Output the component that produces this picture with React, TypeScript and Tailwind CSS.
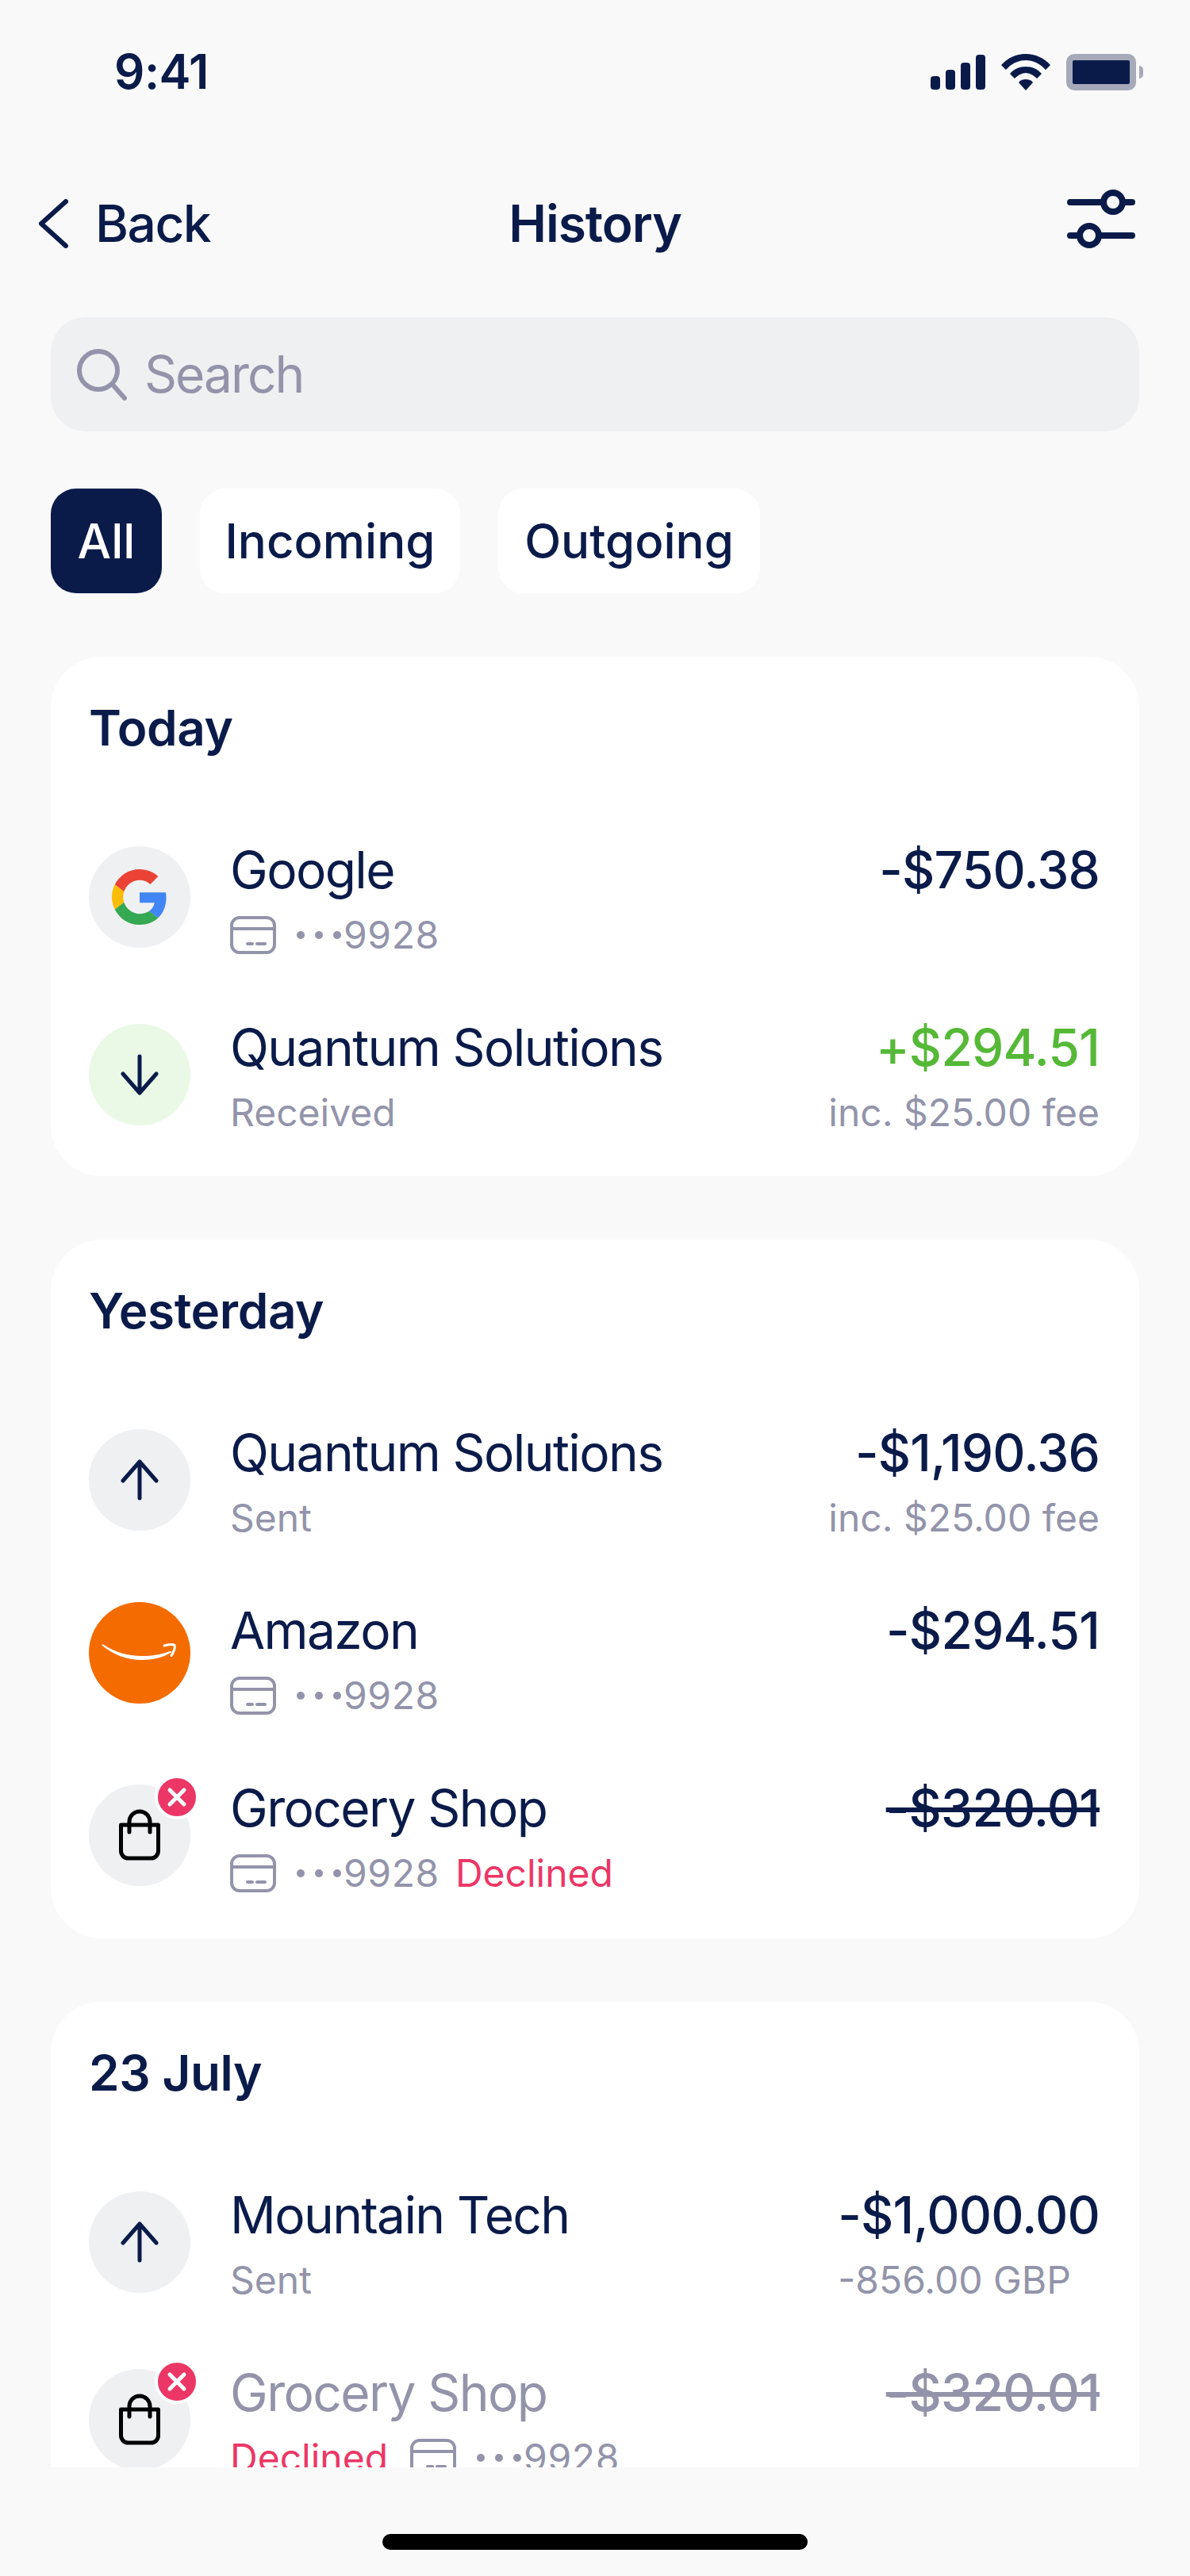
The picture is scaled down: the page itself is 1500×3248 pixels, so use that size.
import type { ReactNode } from "react";

const NAVY = "#0a1b4a";

function CardIcon() {
  return (
    <svg width="58" height="48" viewBox="0 0 58 48" fill="none" stroke="#9394aa" strokeWidth="4" className="shrink-0">
      <rect x="2" y="2" width="54" height="44" rx="10" />
      <path d="M2 16h54" />
      <path d="M22 35h6M34 35h10" strokeLinecap="round" />
    </svg>
  );
}

function CardNumber() {
  return (
    <span className="flex items-center">
      <CardIcon />
      <span className="ml-[26px] flex gap-[13px]">
        <span className="h-[10px] w-[10px] rounded-full bg-[#9394aa]" />
        <span className="h-[10px] w-[10px] rounded-full bg-[#9394aa]" />
        <span className="h-[10px] w-[10px] rounded-full bg-[#9394aa]" />
      </span>
      <span className="ml-[3px] tracking-[0.6px]">9928</span>
    </span>
  );
}

function GoogleLogo() {
  return (
    <svg width="70" height="70" viewBox="0 0 48 48">
      <path fill="#EA4335" d="M24 9.5c3.54 0 6.71 1.22 9.21 3.6l6.85-6.85C35.9 2.38 30.47 0 24 0 14.62 0 6.51 5.38 2.56 13.22l7.98 6.19C12.43 13.72 17.74 9.5 24 9.5z" />
      <path fill="#4285F4" d="M46.98 24.55c0-1.57-.15-3.09-.38-4.55H24v9.02h12.94c-.58 2.96-2.26 5.48-4.78 7.18l7.73 6c4.51-4.18 7.09-10.36 7.09-17.65z" />
      <path fill="#FBBC05" d="M10.53 28.59c-.48-1.45-.76-2.99-.76-4.59s.27-3.14.76-4.59l-7.98-6.19C.92 16.46 0 20.12 0 24c0 3.88.92 7.54 2.56 10.78l7.97-6.19z" />
      <path fill="#34A853" d="M24 48c6.48 0 11.93-2.13 15.89-5.81l-7.73-6c-2.15 1.45-4.92 2.3-8.16 2.3-6.26 0-11.57-4.22-13.47-9.91l-7.98 6.19C6.51 42.62 14.62 48 24 48z" />
    </svg>
  );
}

function AmazonSmile() {
  return (
    <svg width="128" height="128" viewBox="0 0 128 128" fill="none">
      <path d="M17 55c14 11 30 18 50 18 13 0 26-3 36-9 2-1 1-3-1-2-11 4-22 6-35 6-18 0-34-5-48-14-2-1-3 0-2 1z" fill="#fff" />
      <path d="M95 55c4-1 11-2 13-.5 1 2-1 9-4 13" stroke="#fff" strokeWidth="3" strokeLinecap="round" />
    </svg>
  );
}

function BagIcon() {
  return (
    <svg width="54" height="66" viewBox="0 0 54 66" fill="none" stroke="#000" strokeWidth="5" strokeLinecap="round">
      <path d="M3.5 20h47v33a9 9 0 0 1-9 9h-29a9 9 0 0 1-9-9z" strokeLinejoin="round" />
      <path d="M14 29V16a13 13 0 0 1 26 0v13" />
    </svg>
  );
}

function ArrowIcon({ up }: { up?: boolean }) {
  return (
    <svg width="48" height="54" viewBox="0 0 48 54" fill="none" stroke={NAVY} strokeWidth="5" strokeLinecap="round" strokeLinejoin="round">
      {up ? <path d="M24 50V4M3 28 24 4l21 24" /> : <path d="M24 4v46M3 26l21 24 21-24" />}
    </svg>
  );
}

function Avatar({ className, children, declined }: { className: string; children: ReactNode; declined?: boolean }) {
  return (
    <div className={`relative mr-[50px] flex h-[128px] w-[128px] shrink-0 items-center justify-center rounded-full ${className}`}>
      {children}
      {declined && (
        <span className="absolute -right-[11px] -top-[12px] flex h-[56px] w-[56px] items-center justify-center rounded-full border-4 border-white bg-[#ec3766]">
          <svg width="26" height="26" viewBox="0 0 26 26" stroke="#fff" strokeWidth="5" strokeLinecap="round">
            <path d="M4 4l18 18M22 4 4 22" />
          </svg>
        </span>
      )}
    </div>
  );
}

function Row({
  avatar,
  name,
  sub,
  amount,
  amountSub,
  muted,
  amountClass,
  struck,
}: {
  avatar: ReactNode;
  name: string;
  sub: ReactNode;
  amount: string;
  amountSub?: ReactNode;
  muted?: boolean;
  amountClass?: string;
  struck?: boolean;
}) {
  return (
    <div className="flex h-[224px] items-start">
      {avatar}
      <div className="-mt-[10px] flex-1">
        <div className={`h-[82px] text-[64px] leading-[80px] tracking-[-1.6px] ${muted ? "text-[#9394aa]" : "text-[#0a1b4a]"}`}>{name}</div>
        <div className="flex h-[80px] items-center text-[48px] leading-[80px] text-[#9394aa]">{sub}</div>
      </div>
      <div className="-mt-[10px] mr-[2px] flex flex-col items-end">
        <div
          className={`h-[82px] text-[64px] font-medium leading-[80px] tracking-[-0.8px] ${amountClass ?? "text-[#0a1b4a]"} ${struck ? "line-through" : ""}`}
        >
          {amount}
        </div>
        {amountSub}
      </div>
    </div>
  );
}

function Fee() {
  return <div className="h-[80px] text-[48px] leading-[80px] text-[#9394aa]">inc. $25.00 fee</div>;
}

function Card({ title, children, className }: { title: string; children: ReactNode; className?: string }) {
  return (
    <section className={`rounded-[64px] bg-white pl-[48px] pr-[48px] pt-[58px] ${className ?? ""}`}>
      <h2 className="mb-[117px] h-[64px] text-[62px] font-semibold leading-[64px] tracking-[-0.4px] text-[#0a1b4a]">{title}</h2>
      {children}
    </section>
  );
}

export default function App() {
  return (
    <div
      className="flex h-[3248px] w-[1500px] flex-col overflow-hidden bg-[#f9f9fa] text-[#0a1b4a]"
      style={{ fontFamily: "Inter, 'Liberation Sans', sans-serif" }}
    >
      {/* status bar */}
      <div className="flex h-[230px] items-start justify-between pl-[144px] pr-[59px] pt-[52px]">
        <span className="text-[60px] font-semibold leading-[76px] tracking-[-0.5px]">9:41</span>
        <div className="mt-[16px] flex items-center gap-[20px]">
          <svg width="69" height="44" viewBox="0 0 69 44" fill={NAVY}>
            <rect x="0" y="27" width="12" height="17" rx="4" />
            <rect x="19" y="19" width="12" height="25" rx="4" />
            <rect x="38" y="10" width="12" height="34" rx="4" />
            <rect x="57" y="0" width="12" height="44" rx="4" />
          </svg>
          <svg width="62" height="46" viewBox="0 0 62 46" fill={NAVY}>
            <path d="M0 14C8 5 19 0 31 0s23 5 31 14l-6 6C49 12 40 8 31 8s-18 4-25 12z" />
            <path d="M11 25c5-6 12-9 20-9s15 3 20 9l-6 6c-4-4-9-7-14-7s-10 3-14 7z" />
            <path d="M22 36c2-3 5-4 9-4s7 1 9 4l-9 10z" />
          </svg>
          <div className="flex items-center">
            <div className="h-[46px] w-[88px] rounded-[10px] border-[8px] border-[#a6a9b8] bg-[#0a1b4a]" />
            <div className="ml-[4px] h-[16px] w-[5px] rounded-r-full bg-[#a6a9b8]" />
          </div>
        </div>
      </div>

      {/* nav */}
      <div className="flex h-[104px] items-center justify-between pl-[48px] pr-[69px]">
        <div className="flex w-[341px] items-center">
          <svg width="38" height="62" viewBox="0 0 38 62" fill="none" stroke={NAVY} strokeWidth="6" strokeLinecap="round" strokeLinejoin="round">
            <path d="M35 3 4 31l31 28" />
          </svg>
          <span className="ml-[34px] text-[64px] font-medium leading-[80px] tracking-[-1.5px]">Back</span>
        </div>
        <h1 className="text-[64px] font-semibold leading-[80px] tracking-[-1px]">History</h1>
        <div className="-mt-[12px] flex w-[320px] justify-end">
          <svg width="86" height="74" viewBox="0 0 86 74" fill="none" stroke={NAVY} strokeWidth="8" strokeLinecap="round">
            <path d="M4 16h40M72 16h10M4 58h10M42 58h40" />
            <circle cx="58" cy="16" r="12" strokeWidth="8" />
            <circle cx="28" cy="58" r="12" strokeWidth="8" />
          </svg>
        </div>
      </div>

      {/* search */}
      <div className="mx-[64px] mt-[66px] flex h-[144px] items-center rounded-[44px] bg-[#eff0f2] pl-[32px]">
        <svg width="64" height="66" viewBox="0 0 64 66" fill="none" stroke="#9394aa" strokeWidth="6" strokeLinecap="round">
          <circle cx="28" cy="28" r="24" />
          <path d="M46 46l15 17" />
        </svg>
        <span className="ml-[22px] text-[64px] tracking-[-2px] text-[#9394aa]">Search</span>
      </div>

      {/* filters */}
      <div className="mx-[64px] mt-[72px] flex gap-[48px] text-[60px] font-medium">
        <div className="flex h-[132px] w-[140px] items-center justify-center rounded-[32px] bg-[#0a1b4a] text-white">All</div>
        <div className="flex h-[132px] w-[328px] items-center justify-center rounded-[32px] bg-white">Incoming</div>
        <div className="flex h-[132px] w-[330px] items-center justify-center rounded-[32px] bg-white">Outgoing</div>
      </div>

      {/* list */}
      <div className="mx-[64px] mt-[80px] flex h-[2283px] shrink-0 flex-col gap-[80px] overflow-hidden">
        <Card title="Today" className="h-[655px] shrink-0">
          <Row
            avatar={<Avatar className="bg-[#eff0f2]"><GoogleLogo /></Avatar>}
            name="Google"
            sub={<CardNumber />}
            amount="-$750.38"
          />
          <Row
            avatar={<Avatar className="bg-[#e9f9e6]"><ArrowIcon /></Avatar>}
            name="Quantum Solutions"
            sub="Received"
            amount="+$294.51"
            amountClass="text-[#55b937]"
            amountSub={<Fee />}
          />
        </Card>

        <Card title="Yesterday" className="h-[881px] shrink-0">
          <Row
            avatar={<Avatar className="bg-[#eff0f2]"><ArrowIcon up /></Avatar>}
            name="Quantum Solutions"
            sub="Sent"
            amount="-$1,190.36"
            amountSub={<Fee />}
          />
          <Row
            avatar={<Avatar className="-mt-[6px] mb-[6px] bg-[#f46c00]"><AmazonSmile /></Avatar>}
            name="Amazon"
            sub={<CardNumber />}
            amount="-$294.51"
          />
          <Row
            avatar={<Avatar declined className="bg-[#eff0f2]"><BagIcon /></Avatar>}
            name="Grocery Shop"
            sub={
              <>
                <CardNumber />
                <span className="ml-[20px] text-[#ec3766]">Declined</span>
              </>
            }
            amount="-$320.01"
            struck
          />
        </Card>

        <Card title="23 July" className="shrink-0">
          <Row
            avatar={<Avatar className="bg-[#eff0f2]"><ArrowIcon up /></Avatar>}
            name="Mountain Tech"
            sub="Sent"
            amount="-$1,000.00"
            amountSub={
              <div className="h-[80px] self-start text-[48px] leading-[80px] text-[#9394aa]">-856.00 GBP</div>
            }
          />
          <Row
            avatar={<Avatar declined className="bg-[#eff0f2]"><BagIcon /></Avatar>}
            name="Grocery Shop"
            muted
            sub={
              <>
                <span className="mr-[28px] text-[#ec3766]">Declined</span>
                <CardNumber />
              </>
            }
            amount="-$320.01"
            amountClass="text-[#9394aa]"
            struck
          />
        </Card>
      </div>

      {/* home indicator */}
      <div className="mt-[84px] h-[20px] w-[536px] shrink-0 self-center rounded-full bg-black" />
    </div>
  );
}
